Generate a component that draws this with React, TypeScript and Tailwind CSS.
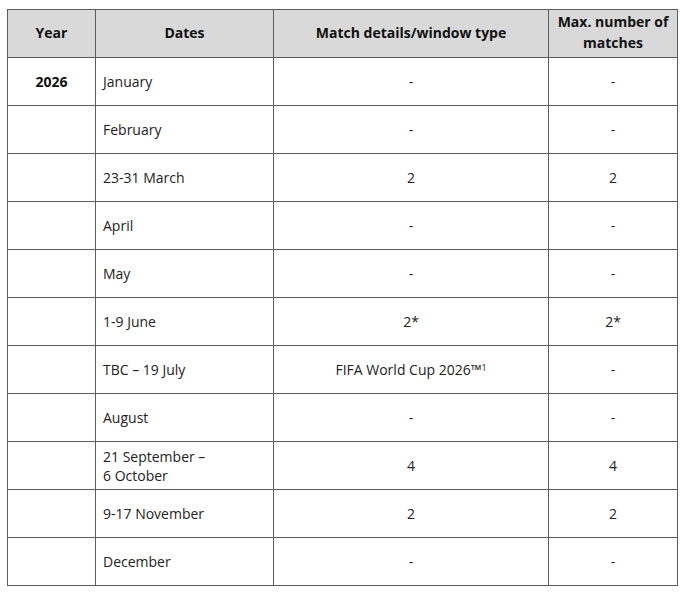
const rows: { year?: string; dates: string[]; details: string; max: string }[] = [
  { year: '2026', dates: ['January'], details: '-', max: '-' },
  { dates: ['February'], details: '-', max: '-' },
  { dates: ['23-31 March'], details: '2', max: '2' },
  { dates: ['April'], details: '-', max: '-' },
  { dates: ['May'], details: '-', max: '-' },
  { dates: ['1-9 June'], details: '2*', max: '2*' },
  { dates: ['TBC – 19 July'], details: 'WC', max: '-' },
  { dates: ['August'], details: '-', max: '-' },
  { dates: ['21 September –', '6 October'], details: '4', max: '4' },
  { dates: ['9-17 November'], details: '2', max: '2' },
  { dates: ['December'], details: '-', max: '-' },
]

const cell = 'border border-[#5c5c5c] align-middle'

export default function App() {
  return (
    <div className="bg-white w-[680px] h-[593px] pt-[9px] pl-[7px] text-[14px] text-[#222] font-['Open_Sans',sans-serif]">
      <table className="table-fixed border-collapse w-[670px]">
        <colgroup>
          <col className="w-[88px]" />
          <col className="w-[178px]" />
          <col className="w-[275px]" />
          <col className="w-[129px]" />
        </colgroup>
        <thead>
          <tr className="h-[48px] bg-[#d9d9d9] font-bold text-[#111]">
            <th className={`${cell} text-center pb-[3px]`}>Year</th>
            <th className={`${cell} text-center pb-[3px]`}>Dates</th>
            <th className={`${cell} text-center pb-[3px]`}>Match details/window type</th>
            <th className={`${cell} text-center leading-[21px] pb-[3px]`}>
              Max. number of
              <br />
              matches
            </th>
          </tr>
        </thead>
        <tbody>
          {rows.map((r, i) => (
            <tr key={i} className="h-[48px]">
              <td className={`${cell} text-center font-bold text-[#111]`}>{r.year ?? ''}</td>
              <td className={`${cell} pl-[7px] leading-[19px]`}>
                {r.dates.map((d, j) => (
                  <div key={j}>{d}</div>
                ))}
              </td>
              <td className={`${cell} text-center`}>
                {r.details === 'WC' ? (
                  <span>
                    FIFA World Cup 2026™<sup className="text-[9px] relative -top-[4px] align-baseline">1</sup>
                  </span>
                ) : (
                  r.details
                )}
              </td>
              <td className={`${cell} text-center`}>{r.max}</td>
            </tr>
          ))}
        </tbody>
      </table>
    </div>
  )
}
